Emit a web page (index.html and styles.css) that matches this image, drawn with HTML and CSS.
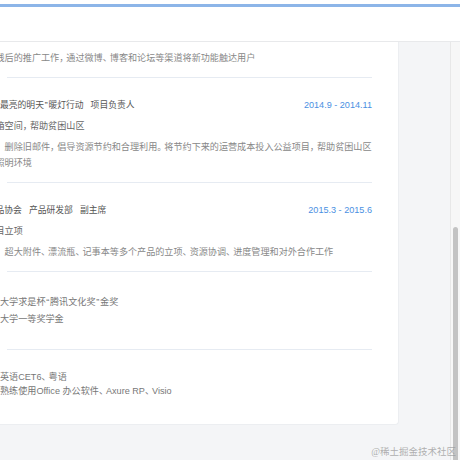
FILE: index.html
```html
<!DOCTYPE html>
<html lang="zh-CN">
<head>
<meta charset="utf-8">
<title>简历</title>
<link rel="stylesheet" href="styles.css">
</head>
<body>
<div class="topbar"></div>
<header class="header"></header>
<div class="main">
  <div class="content">
    <section class="card">
      <div class="item item-partial">
        <p class="desc">线后的推广工作<span class="pu">，</span>通过微博<span class="pu">、</span>博客和论坛等渠道将新功能触达用户</p>
      </div>
      <div class="divider"></div>
      <div class="item">
        <div class="item-head">
          <div class="item-title"><span><span class="q">“</span>最亮的明天<span class="q">”</span>暖灯行动</span><span>项目负责人</span></div>
          <div class="item-date">2014.9 - 2014.11</div>
        </div>
        <div class="item-sub">箱空间<span class="pu">，</span>帮助贫困山区</div>
        <p class="desc">，删除旧邮件<span class="pu">，</span>倡导资源节约和合理利用<span class="pu">。</span>将节约下来的运营成本投入公益项目<span class="pu">，</span>帮助贫困山区<br>照明环境</p>
      </div>
      <div class="divider"></div>
      <div class="item">
        <div class="item-head">
          <div class="item-title"><span>品协会</span><span>产品研发部</span><span>副主席</span></div>
          <div class="item-date">2015.3 - 2015.6</div>
        </div>
        <div class="item-sub">目立项</div>
        <p class="desc">：超大附件<span class="pu">、</span>漂流瓶<span class="pu">、</span>记事本等多个产品的立项<span class="pu">、</span>资源协调<span class="pu">、</span>进度管理和对外合作工作</p>
      </div>
      <div class="divider"></div>
      <ul class="list awards">
        <li>大学求是杯<span class="q">“</span>腾讯文化奖<span class="q">”</span>金奖</li>
        <li>大学一等奖学金</li>
      </ul>
      <div class="divider"></div>
      <ul class="list skills">
        <li>英语CET6<span class="pu">、</span>粤语</li>
        <li>熟练使用Office 办公软件<span class="pu">、</span>Axure RP<span class="pu">、</span>Visio</li>
      </ul>
    </section>
  </div>
  <div class="scrollbar"><div class="thumb"></div></div>
</div>
<div class="watermark">@稀土掘金技术社区</div>
</body>
</html>
```
FILE: styles.css
```css
* {
  box-sizing: border-box;
  margin: 0;
  padding: 0;
}

html,
body {
  height: 100%;
  background: #fff;
}

body {
  position: relative;
  overflow: hidden;
  padding-top: 4px;
  font-family: "Liberation Sans", "Noto Sans CJK SC", sans-serif;
  font-size: 9.1px;
  color: #888;
}

.topbar {
  height: 3px;
  background: #8cb5e8;
}

.header {
  height: 35px;
  background: #fff;
  border-bottom: 1px solid #e8e9eb;
}

.main {
  display: flex;
  height: 418px;
  background: #f4f5f7;
  overflow: hidden;
}

.content {
  flex: 1;
  min-width: 0;
}

.card {
  margin: 0 51px 0 -24.5px;
  padding: 6.5px 26px 26px 19px;
  background: #fff;
  border: 1px solid #eceef1;
  border-top: 0;
  border-radius: 0 0 4px 4px;
}

.item {
  padding: 17px 0 12px;
}

.item-partial {
  padding: 0 0 12px;
}

.item-partial .desc {
  margin-top: 0;
}

.item-head {
  display: flex;
  justify-content: space-between;
  align-items: center;
  height: 20px;
}

.item-title {
  display: flex;
  gap: 7px;
  color: #555;
  font-size: 8.8px;
}

.item-date {
  color: #4a90e2;
}

.item-sub {
  font-family: "Noto Sans CJK SC", sans-serif;
  line-height: 21px;
  color: #666;
}

.desc {
  margin-top: 2px;
  font-family: "Noto Sans CJK SC", sans-serif;
  line-height: 16px;
  white-space: nowrap;
  color: #888;
}

.pu {
  letter-spacing: -2px;
}

.q {
  padding: 0 0.75px;
}

.divider {
  height: 1px;
  margin-left: 11.5px;
  background: #e6ebf2;
}

.list {
  list-style: none;
  padding-left: 4.5px;
  color: #777;
}

.awards {
  padding-top: 22px;
  padding-bottom: 21.5px;
  line-height: 17px;
}

.skills {
  padding-top: 20px;
  line-height: 14px;
}

.scrollbar {
  width: 10px;
  background: #f7f7f7;
  border-left: 1px solid #e8e8e8;
}

.thumb {
  width: 5px;
  height: 260px;
  margin: 185px 0 0 2px;
  background: #c3c3c3;
  border-radius: 3px;
}

.watermark {
  position: absolute;
  right: 4px;
  bottom: 2px;
  font-family: "Liberation Serif", "Noto Sans CJK SC", serif;
  font-size: 9.5px;
  line-height: 12px;
  color: rgba(150, 150, 150, 0.75);
}
```
